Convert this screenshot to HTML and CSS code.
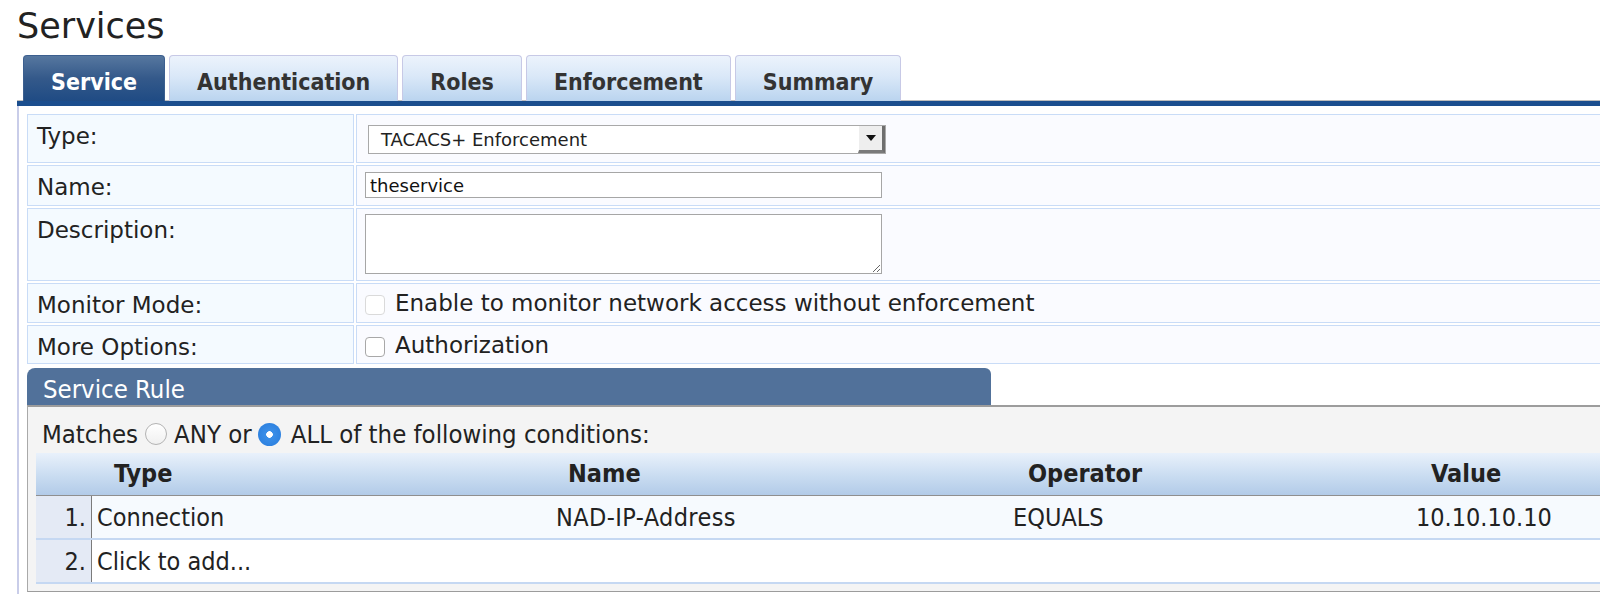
FILE: index.html
```html
<!DOCTYPE html>
<html>
<head>
<meta charset="utf-8">
<link rel="stylesheet" href="styles.css">
</head>
<body>
<div class="page">
  <h1 class="title">Services</h1>
  <div class="tabs">
    <div class="tab active">Service</div>
    <div class="tab">Authentication</div>
    <div class="tab">Roles</div>
    <div class="tab">Enforcement</div>
    <div class="tab">Summary</div>
  </div>
  <div class="bar"></div>
  <div class="panel">
    <div class="form">
      <div class="lbl">Type:</div>
      <div class="val val-type">
        <div class="select">
          <span class="sel-text">TACACS+ Enforcement</span>
          <span class="sel-btn"><svg width="10" height="6" viewBox="0 0 10 6"><path d="M0 0H10L5 6Z" fill="#111"/></svg></span>
        </div>
      </div>
      <div class="lbl">Name:</div>
      <div class="val val-name"><input class="text-in" type="text" value="theservice"></div>
      <div class="lbl">Description:</div>
      <div class="val val-desc"><textarea class="text-area"></textarea></div>
      <div class="lbl">Monitor Mode:</div>
      <div class="val val-check"><span class="cbox disabled"></span><span>Enable to monitor network access without enforcement</span></div>
      <div class="lbl">More Options:</div>
      <div class="val val-check"><span class="cbox"></span><span>Authorization</span></div>
    </div>

    <div class="rule">
      <div class="rule-head">Service Rule</div>
      <div class="rule-box">
        <div class="matches">
          <span>Matches</span><span class="radio"></span><span>ANY or</span><span class="radio on"></span><span>ALL of the following conditions:</span>
        </div>
        <div class="rtable">
          <div class="rrow rhead">
            <div class="cell num"></div>
            <div class="cell c-type">Type</div>
            <div class="cell c-name">Name</div>
            <div class="cell c-op">Operator</div>
            <div class="cell c-val">Value</div>
          </div>
          <div class="rrow odd">
            <div class="cell num">1.</div>
            <div class="cell c-type">Connection</div>
            <div class="cell c-name">NAD-IP-Address</div>
            <div class="cell c-op">EQUALS</div>
            <div class="cell c-val">10.10.10.10</div>
          </div>
          <div class="rrow">
            <div class="cell num">2.</div>
            <div class="cell c-type">Click to add...</div>
            <div class="cell c-name"></div>
            <div class="cell c-op"></div>
            <div class="cell c-val"></div>
          </div>
        </div>
      </div>
    </div>
  </div>
</div>
</body>
</html>
```

FILE: styles.css
```css
html, body {
  margin: 0;
  padding: 0;
  background: #fff;
  overflow: hidden;
}
body {
  width: 1600px;
  height: 594px;
  font-family: "DejaVu Sans", Verdana, sans-serif;
  color: #222;
}
.page {
  width: 1600px;
  height: 594px;
  overflow: hidden;
}
.title {
  margin: 0;
  height: 55px;
  box-sizing: border-box;
  padding: 6px 0 0 17px;
  font-size: 35px;
  font-weight: normal;
  line-height: 40px;
  color: #222;
}
.tabs {
  display: flex;
  gap: 4px;
  margin-left: 17px;
  padding-left: 6px;
  height: 46px;
  background: linear-gradient(to top, #bdbdbd 1px, transparent 1px);
}
.tab {
  height: 46px;
  box-sizing: border-box;
  padding: 5px 27px 0;
  border: 1px solid #c7c9e6;
  border-bottom: none;
  border-radius: 4px 4px 0 0;
  background: linear-gradient(#ecf3fc, #dae8f8 45%, #bad4ef);
  font-family: "DejaVu Sans Condensed", "Liberation Sans", sans-serif;
  font-weight: bold;
  font-size: 23px;
  line-height: 42px;
  color: #333;
}
.tab.active {
  background: linear-gradient(#56779f, #34598a 50%, #1f4b84);
  border-color: #3c5f8f;
  color: #fff;
}
.bar {
  margin-left: 17px;
  height: 5px;
  background: #1b4e8e;
}
.panel {
  margin-left: 17px;
  border-left: 2px solid #c9cde9;
  padding: 8px 0 0 8px;
  height: 500px;
}
.form {
  width: 1640px;
  display: grid;
  grid-template-columns: 327px 1fr;
  grid-template-rows: 49px 41px 73px 40px 39px;
  gap: 2px;
  font-size: 23px;
}
.lbl, .val {
  border: 1px solid #c9dcf7;
  box-sizing: border-box;
}
.lbl {
  background: #f4faff;
  padding: 8px 9px;
}
.val {
  background: #fafbff;
  padding-left: 8px;
}
.val-type { padding-top: 10px; }
.select {
  margin-left: 3px;
  width: 518px;
  height: 29px;
  box-sizing: border-box;
  border: 1px solid #a9a9a9;
  background: #fff;
  display: flex;
  align-items: center;
  font-size: 18px;
}
.sel-text {
  flex: 1;
  padding-left: 12px;
}
.sel-btn {
  width: 27px;
  height: 27px;
  box-sizing: border-box;
  background: #eeeeee;
  border-right: 3px solid #6e6e6e;
  border-bottom: 3px solid #7a7a7a;
  border-left: 1px solid #fff;
  display: flex;
  align-items: center;
  justify-content: center;
}
.val-name { padding-top: 6px; }
.text-in {
  display: block;
  margin: 0;
  width: 517px;
  height: 26px;
  box-sizing: border-box;
  border: 1px solid #a6a6a6;
  padding: 0 4px;
  font-family: "DejaVu Sans", sans-serif;
  font-size: 18px;
  color: #111;
  background: #fff;
  outline: none;
}
.val-desc { padding-top: 5px; }
.text-area {
  display: block;
  margin: 0;
  width: 517px;
  height: 60px;
  box-sizing: border-box;
  border: 1px solid #a6a6a6;
  background: #fff;
  outline: none;
}
.val-check {
  display: flex;
  align-items: flex-start;
  gap: 10px;
  padding-top: 6px;
}
.cbox {
  margin-top: 5px;
  width: 20px;
  height: 20px;
  box-sizing: border-box;
  border: 1px solid #a8a8a8;
  border-radius: 4px;
  background: #fff;
  flex: none;
}
.cbox.disabled {
  border-color: #dadada;
}

/* Service rule */
.rule {
  margin-top: 4px;
  font-family: "DejaVu Sans Condensed", "Liberation Sans", sans-serif;
  font-size: 25px;
}
.rule-head {
  width: 964px;
  height: 37px;
  box-sizing: border-box;
  padding: 5px 0 0 16px;
  line-height: 32px;
  border-radius: 8px 6px 0 0;
  background: #51719a;
  color: #fff;
  font-size: 25.5px;
}
.rule-box {
  width: 1640px;
  border-top: 2px solid #9c9c9c;
  border-left: 1px solid #a9a9a9;
  border-bottom: 1px solid #9c9c9c;
  background: #f4f4f4;
  padding: 0 0 7px 8px;
}
.matches {
  height: 46px;
  box-sizing: border-box;
  padding: 8px 0 0 6px;
  line-height: 29px;
  display: flex;
  align-items: center;
  font-size: 25.5px;
}
.matches > span { flex: none; }
.radio {
  width: 22px;
  height: 22px;
  box-sizing: border-box;
  border-radius: 50%;
  border: 1px solid #b3b3b3;
  background: linear-gradient(#ffffff, #f0f0f0);
  margin: 0 7px 0 7px;
}
.radio.on {
  width: 23px;
  height: 23px;
  border: none;
  background: radial-gradient(circle, #fff 3px, #3a8ee8 3.6px, #2e82e0 11.5px);
  margin: 0 10px 0 6px;
}
.rtable {
  display: flex;
  flex-direction: column;
}
.rrow {
  display: grid;
  grid-template-columns: 56px 450px 450px 400px 1fr;
  height: 44px;
  box-sizing: border-box;
  border-bottom: 2px solid #c5d8f2;
  background: #fff;
  padding-top: 2px;
  line-height: 40px;
}
.rrow.odd { background: #f6fafe; }
.rrow.rhead {
  height: 43px;
  padding-top: 1px;
  border-bottom: 1px solid #8f8f8f;
  background: linear-gradient(#e9f1fb, #c9dcf1 55%, #b2cbe8);
  font-weight: bold;
  color: #222;
}
.cell {
  white-space: nowrap;
  overflow: hidden;
}
.rrow .num {
  background: #e4eaf5;
  border-right: 1px solid #7b7b7b;
  text-align: right;
  padding-right: 5px;
  margin-top: -2px;
  padding-top: 2px;
}
.rrow.rhead .num {
  background: transparent;
  border-right: none;
}
.rrow .c-type { padding-left: 5px; }
.rrow .c-name { padding-left: 14px; letter-spacing: 0.4px; }
.rrow .c-op { padding-left: 21px; }
.rrow .c-val { padding-left: 24px; }
.rrow.rhead .c-type { padding-left: 22px; }
.rrow.rhead .c-name { padding-left: 26px; letter-spacing: 0; }
.rrow.rhead .c-op { padding-left: 36px; }
.rrow.rhead .c-val { padding-left: 39px; }
```
